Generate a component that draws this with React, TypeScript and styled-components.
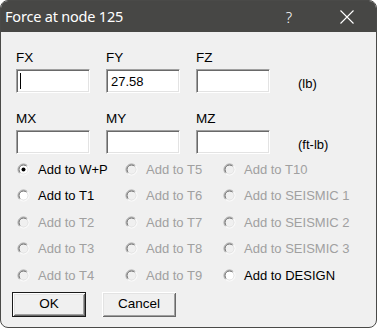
import React from "react";
import styled, { createGlobalStyle } from "styled-components";

const Global = createGlobalStyle`
  html, body { margin: 0; padding: 0; background: #ffffff; }
  * { box-sizing: border-box; }
`;

const Window = styled.div`
  width: 377px;
  height: 328px;
  border: 1px solid #4a4a48;
  border-radius: 8px;
  overflow: hidden;
  background: #f0f0f0;
  display: flex;
  flex-direction: column;
  font-family: "Liberation Sans", Arial, sans-serif;
  font-size: 13px;
  color: #000;
`;

const TitleBar = styled.div`
  height: 31px;
  background: #474745;
  display: flex;
  align-items: stretch;
  color: #fff;
  flex: none;
`;

const Title = styled.div`
  flex: 1;
  display: flex;
  align-items: center;
  padding-left: 4px;
  padding-bottom: 1px;
  font-family: "Noto Sans", "Open Sans", sans-serif;
  font-size: 14.5px;
  letter-spacing: -0.2px;
`;

const CaptionButton = styled.div`
  width: 58px;
  display: flex;
  align-items: center;
  justify-content: center;
  font-family: "Noto Sans", "Open Sans", sans-serif;
  font-size: 15px;
  font-weight: 300;
  color: #fff;
`;

const Body = styled.div`
  flex: 1;
  display: flex;
  flex-direction: column;
  padding: 18px 0 0 15px;
`;

const FieldRow = styled.div<{ $mt?: number }>`
  display: flex;
  align-items: flex-end;
  gap: 16px;
  margin-top: ${(p) => p.$mt ?? 0}px;
`;

const Field = styled.div`
  display: flex;
  flex-direction: column;
  gap: 4px;
  width: 74px;
`;

const Label = styled.div`
  line-height: 15px;
  height: 15px;
  font-size: 13.5px;
`;

const TextBox = styled.div`
  height: 24px;
  width: 74px;
  background: #fff;
  border: 1px solid;
  border-color: #a0a0a0 #ffffff #ffffff #a0a0a0;
  box-shadow: inset 1px 1px #696969, inset -1px -1px #e3e3e3;
  display: flex;
  align-items: center;
  padding-left: 4px;
  line-height: 15px;
`;

const Caret = styled.span`
  display: block;
  width: 1px;
  height: 16px;
  background: #000;
  margin-left: -1px;
`;

const Unit = styled.div`
  margin-left: 12px;
  line-height: 15px;
  margin-bottom: 2px;
`;

const RadioGrid = styled.div`
  display: grid;
  grid-template-columns: 108px 98px auto;
  grid-auto-rows: 26.5px;
  margin-top: 2px;
  padding-left: 1px;
`;

const RadioItem = styled.div<{ $disabled?: boolean }>`
  display: flex;
  align-items: center;
  gap: 8px;
  color: ${(p) => (p.$disabled ? "#a0a0a0" : "#000")};
  line-height: 15px;
  white-space: nowrap;
`;

const ButtonRow = styled.div`
  display: flex;
  gap: 16px;
  margin-top: 3px;
  margin-left: -4px;
`;

const Button = styled.div<{ $default?: boolean }>`
  width: 74px;
  height: 25px;
  display: flex;
  align-items: center;
  justify-content: center;
  background: #f0f0f0;
  border: ${(p) => (p.$default ? "1px solid #1a1a1a" : "none")};
  box-shadow: inset 1px 1px #ffffff, inset -1px -1px #696969, inset 2px 2px #e3e3e3,
    inset -2px -2px #a0a0a0;
  padding-bottom: 1px;
  font-size: 13.5px;
`;

const RadioIcon = ({ checked, disabled }: { checked?: boolean; disabled?: boolean }) => {
  const c = 6.5;
  const arc = (r: number) => {
    const d = r * Math.SQRT1_2;
    return {
      tl: `M ${c - d} ${c + d} A ${r} ${r} 0 0 1 ${c + d} ${c - d}`,
      br: `M ${c + d} ${c - d} A ${r} ${r} 0 0 1 ${c - d} ${c + d}`,
    };
  };
  const o = arc(5.5);
  const i = arc(4.5);
  return (
    <svg width="13" height="13" viewBox="0 0 13 13" style={{ flex: "none" }}>
      <circle cx={c} cy={c} r={4.5} fill={disabled ? "#f0f0f0" : "#ffffff"} />
      <path d={o.tl} stroke="#a0a0a0" strokeWidth="1" fill="none" />
      <path d={o.br} stroke="#ffffff" strokeWidth="1" fill="none" />
      <path d={i.tl} stroke="#696969" strokeWidth="1" fill="none" />
      <path d={i.br} stroke="#e3e3e3" strokeWidth="1" fill="none" />
      {checked && <circle cx={c} cy={c} r={2} fill="#000" />}
    </svg>
  );
};

const CloseIcon = () => (
  <svg width="14" height="14" viewBox="0 0 14 14">
    <path d="M0.5 0.5 L13.5 13.5 M13.5 0.5 L0.5 13.5" stroke="#fff" strokeWidth="1.1" />
  </svg>
);

const radios: { label: string; disabled?: boolean; checked?: boolean }[] = [
  { label: "Add to W+P", checked: true },
  { label: "Add to T5", disabled: true },
  { label: "Add to T10", disabled: true },
  { label: "Add to T1" },
  { label: "Add to T6", disabled: true },
  { label: "Add to SEISMIC 1", disabled: true },
  { label: "Add to T2", disabled: true },
  { label: "Add to T7", disabled: true },
  { label: "Add to SEISMIC 2", disabled: true },
  { label: "Add to T3", disabled: true },
  { label: "Add to T8", disabled: true },
  { label: "Add to SEISMIC 3", disabled: true },
  { label: "Add to T4", disabled: true },
  { label: "Add to T9", disabled: true },
  { label: "Add to DESIGN" },
];

export default function App() {
  return (
    <>
      <Global />
      <Window>
        <TitleBar>
          <Title>Force at node 125</Title>
          <CaptionButton>?</CaptionButton>
          <CaptionButton>
            <CloseIcon />
          </CaptionButton>
        </TitleBar>
        <Body>
          <FieldRow>
            <Field>
              <Label>FX</Label>
              <TextBox>
                <Caret />
              </TextBox>
            </Field>
            <Field>
              <Label>FY</Label>
              <TextBox>27.58</TextBox>
            </Field>
            <Field>
              <Label>FZ</Label>
              <TextBox />
            </Field>
            <Unit>(lb)</Unit>
          </FieldRow>
          <FieldRow $mt={18}>
            <Field>
              <Label>MX</Label>
              <TextBox />
            </Field>
            <Field>
              <Label>MY</Label>
              <TextBox />
            </Field>
            <Field>
              <Label>MZ</Label>
              <TextBox />
            </Field>
            <Unit>(ft-lb)</Unit>
          </FieldRow>
          <RadioGrid>
            {radios.map((r) => (
              <RadioItem key={r.label} $disabled={r.disabled}>
                <RadioIcon checked={r.checked} disabled={r.disabled} />
                <span>{r.label}</span>
              </RadioItem>
            ))}
          </RadioGrid>
          <ButtonRow>
            <Button $default>OK</Button>
            <Button>Cancel</Button>
          </ButtonRow>
        </Body>
      </Window>
    </>
  );
}
